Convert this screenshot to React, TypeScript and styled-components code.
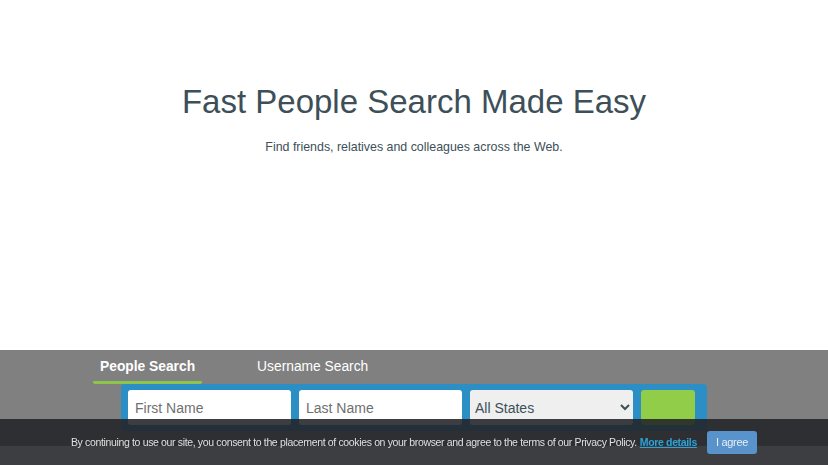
import React from 'react';
import styled, { createGlobalStyle } from 'styled-components';

const GlobalStyle = createGlobalStyle`
  body {
    margin: 0;
    background: #fff;
    font-family: "Liberation Sans", Arial, sans-serif;
  }
`;

const Hero = styled.section`
  height: 350px;
  box-sizing: border-box;
  padding-top: 82px;
  text-align: center;
  color: #3d4f58;
`;

const Title = styled.h1`
  margin: 0;
  font-size: 33px;
  font-weight: normal;
  line-height: 40px;
`;

const Subtitle = styled.p`
  margin: 17px 0 0;
  font-size: 12.4px;
  line-height: 16px;
`;

const SearchBand = styled.section`
  height: 96px;
  background: #808080;
`;

const SearchInner = styled.div`
  width: 642px;
  margin: 0 auto;
`;

const Tabs = styled.div`
  display: flex;
  gap: 48px;
  height: 34px;
`;

const Tab = styled.div<{ $active?: boolean }>`
  padding: 8px 7px 0;
  height: 34px;
  box-sizing: border-box;
  font-size: 13.8px;
  line-height: 17px;
  color: #fff;
  font-weight: ${p => (p.$active ? 'bold' : 'normal')};
  border-bottom: 3px solid ${p => (p.$active ? '#8cc54a' : 'transparent')};
  border-radius: 0 0 2px 2px;
`;

const SearchForm = styled.form`
  width: 586px;
  margin: 0 0 0 28px;
  box-sizing: border-box;
  padding: 6px 11px 6px 7px;
  display: flex;
  gap: 8px;
  background: #2b8fc6;
  border-radius: 4px;
`;

const Field = styled.input`
  width: 163px;
  height: 35px;
  box-sizing: border-box;
  border: none;
  border-radius: 3px;
  padding: 0 7px;
  font-family: inherit;
  font-size: 14px;
  color: #333;
  background: #fff;
  &::placeholder {
    color: #6f6f6f;
  }
`;

const StateSelect = styled.select`
  width: 163px;
  height: 35px;
  box-sizing: border-box;
  border: none;
  border-radius: 3px;
  padding: 0 1px;
  font-family: inherit;
  font-size: 14px;
  color: #3d4f58;
  background: #efefef;
`;

const Go = styled.button`
  width: 54px;
  height: 35px;
  border: none;
  border-radius: 3px;
  background: #92cd4a;
`;

const CookieBar = styled.div`
  position: fixed;
  left: 0;
  right: 0;
  bottom: 0;
  height: 46px;
  display: flex;
  align-items: center;
  justify-content: center;
  white-space: nowrap;
  background: rgba(34, 35, 39, 0.88);
  color: #e0e0e0;
  font-size: 10.5px;
  letter-spacing: -0.35px;
`;

const MoreLink = styled.a`
  color: #2da3d8;
  font-weight: bold;
  text-decoration: underline;
  margin-left: 3px;
`;

const Agree = styled.button`
  height: 23px;
  margin-left: 10px;
  padding: 0 9px;
  border: none;
  border-radius: 3px;
  background: #5893cc;
  color: #e8eef5;
  font-family: inherit;
  font-size: 11px;
  letter-spacing: -0.3px;
`;

const App: React.FC = () => (
  <>
    <GlobalStyle />
    <Hero>
      <Title>Fast People Search Made Easy</Title>
      <Subtitle>Find friends, relatives and colleagues across the Web.</Subtitle>
    </Hero>
    <SearchBand>
      <SearchInner>
        <Tabs>
          <Tab $active>People Search</Tab>
          <Tab>Username Search</Tab>
        </Tabs>
        <SearchForm onSubmit={e => e.preventDefault()}>
          <Field placeholder="First Name" />
          <Field placeholder="Last Name" />
          <StateSelect defaultValue="">
            <option value="">All States</option>
            <option value="AL">Alabama</option>
            <option value="AK">Alaska</option>
          </StateSelect>
          <Go type="submit" aria-label="Search" />
        </SearchForm>
      </SearchInner>
    </SearchBand>
    <CookieBar>
      <span>
        By continuing to use our site, you consent to the placement of cookies on your browser and agree to the terms of our Privacy Policy.
      </span>
      <MoreLink href="#">More details</MoreLink>
      <Agree>I agree</Agree>
    </CookieBar>
  </>
);

export default App;
